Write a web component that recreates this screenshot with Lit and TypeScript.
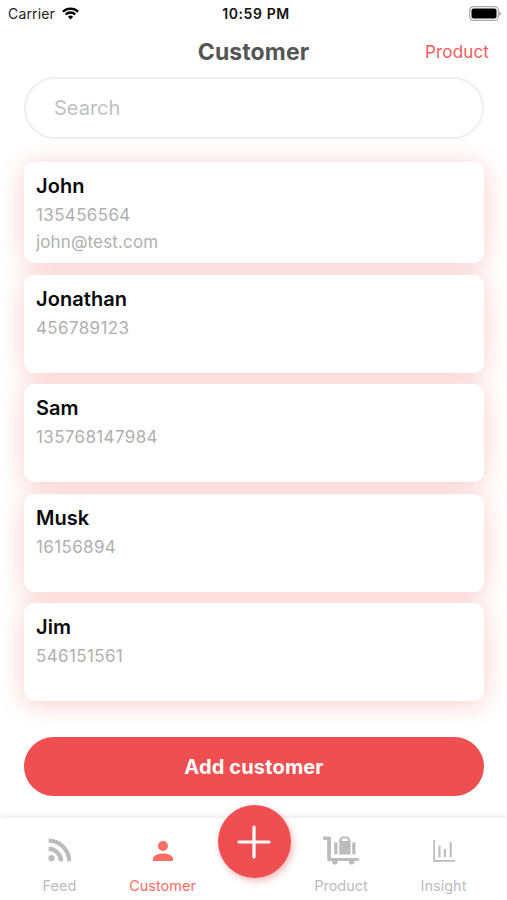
import { LitElement, html, css, svg } from "lit";
import { customElement } from "lit/decorators.js";
import { classMap } from "lit/directives/class-map.js";

interface Customer {
  name: string;
  phone: string;
  email?: string;
}

const customers: Customer[] = [
  { name: "John", phone: "135456564", email: "john@test.com" },
  { name: "Jonathan", phone: "456789123" },
  { name: "Sam", phone: "135768147984" },
  { name: "Musk", phone: "16156894" },
  { name: "Jim", phone: "546151561" },
];

const feedIcon = svg`<svg width="24" height="24" viewBox="0 0 24 24" fill="none" stroke="currentColor" stroke-width="4.200">
  <circle cx="3.500" cy="20.200" r="3.100" fill="currentColor" stroke="none"/>
  <path d="M.6 10.900A12.500 12.500 0 0 1 13.100 23.200M.6 2.700A20.600 20.600 0 0 1 21.200 23.200"/></svg>`;

const personIcon = svg`<svg width="20" height="20" viewBox="0 0 20 20" fill="currentColor">
  <circle cx="10" cy="5" r="5"/>
  <path d="M0 20v-2.200C0 14.400 5.600 12.600 10 12.600s10 1.800 10 5.200V20z"/></svg>`;

const cartIcon = svg`<svg width="37" height="29" viewBox="0 0 37 29" fill="currentColor">
  <path d="M0 .6h6.500q1.500 0 1.500 1.500V22h27.200q1.200 0 1.200 1.500t-1.200 1.500h-3.800a2.900 2.900 0 1 1-5.600 0H14.700a2.900 2.900 0 1 1-5.600 0H5.500q-1.300 0-1.300-1.300V3.900H1.100Q0 3.900 0 2.700z"/>
  <rect x="11.200" y="6.300" width="3.300" height="12.200" rx="1.300"/>
  <rect x="29.200" y="6.300" width="3.300" height="12.200" rx="1.300"/>
  <path fill-rule="evenodd" d="M16.200 4.600 17.200 2.300Q17.600.6 19.200.6h5.200q1.600 0 2 1.700l1.100 2.300v13.900H16.200zM18.900 5h5.800V3.200q0-.6-.6-.6h-4.600q-.6 0-.6.6z"/></svg>`;

const chartIcon = svg`<svg width="22" height="22" viewBox="0 0 22 22" fill="none" stroke="currentColor" stroke-width="1.700">
  <path d="M1.100 0v20.800H22"/>
  <path stroke-width="2.100" d="M6.500 5.800v11.400M11.900 9v8.200M17.700 1.900v15.300"/></svg>`;

const wifiIcon = svg`<svg width="17" height="13" viewBox="0 0 17 13" fill="none" stroke="#000" stroke-width="2.300">
  <path d="M.9 4.700a10.800 10.800 0 0 1 15.200 0M3.700 7.500a6.800 6.800 0 0 1 9.600 0"/>
  <path fill="#000" stroke="none" d="M8.500 12.500 5.900 9.700a3.700 3.700 0 0 1 5.200 0z"/></svg>`;

const batteryIcon = svg`<svg width="32" height="15" viewBox="0 0 32 15">
  <rect x=".7" y=".7" width="28.600" height="13.600" rx="3.600" fill="#fff" stroke="#aaa" stroke-width="1.200"/>
  <rect x="2.500" y="2.600" width="25" height="9.800" rx="2" fill="#000"/>
  <path d="M30.300 5.200q1.500.6 1.500 2.300t-1.500 2.300z" fill="#999"/></svg>`;

const tabs = [
  { label: "Feed", icon: feedIcon, key: "feed" },
  { label: "Customer", icon: personIcon, key: "customer" },
  { label: "", icon: "", key: "gap" },
  { label: "Product", icon: cartIcon, key: "product" },
  { label: "Insight", icon: chartIcon, key: "insight" },
];

@customElement("customer-card")
class CustomerCard extends LitElement {
  static properties = { customer: { attribute: false } };
  declare customer: Customer;

  static styles = css`
    :host {
      display: block;
      position: relative;
      box-sizing: border-box;
      min-height: 98px;
      padding: 11px 12px 7px;
      border-radius: 11px;
      background: #fff;
    }
    :host::before {
      content: "";
      position: absolute;
      inset: 0;
      z-index: -1;
      border-radius: 11px;
      box-shadow: 0 3px 25px rgba(236, 72, 72, 0.28);
    }
    .name {
      font-size: 20px;
      font-weight: 600;
      line-height: 27px;
      color: #0a0a0a;
      letter-spacing: 0.06px;
    }
    .line {
      font-size: 17px;
      line-height: 27px;
      color: #b0b0b0;
    }
    .phone {
      margin-top: 2px;
      letter-spacing: 0.36px;
    }
    .email {
      letter-spacing: 0.15px;
    }
  `;

  render() {
    const { name, phone, email } = this.customer;
    return html`
      <div class="name">${name}</div>
      <div class="line phone">${phone}</div>
      ${email ? html`<div class="line email">${email}</div>` : ""}
    `;
  }
}

@customElement("app-root")
class AppRoot extends LitElement {
  static styles = css`
    :host {
      display: flex;
      flex-direction: column;
      height: 900px;
      overflow: hidden;
      background: #fff;
      font-family: Inter, "Liberation Sans", sans-serif;
    }
    svg {
      display: block;
    }
    .status {
      display: grid;
      grid-template-columns: 1fr auto 1fr;
      align-items: center;
      height: 27px;
      padding: 0 6px 0 8px;
      font-size: 14px;
      color: #222;
    }
    .carrier {
      display: flex;
      align-items: center;
      gap: 7px;
      letter-spacing: 0.15px;
    }
    .clock {
      padding-left: 3px;
      font-weight: 600;
      color: #111;
      letter-spacing: 0.6px;
    }
    .battery {
      justify-self: end;
    }
    .header {
      display: grid;
      grid-template-columns: 1fr auto 1fr;
      align-items: center;
      height: 50px;
      padding: 0 18px;
    }
    .title {
      grid-column: 2;
      font-size: 23px;
      font-weight: 700;
      color: #555;
      letter-spacing: 0.1px;
    }
    .link {
      justify-self: end;
      font-size: 17px;
      color: #f25c5e;
      letter-spacing: 0.15px;
    }
    .search {
      display: flex;
      align-items: center;
      box-sizing: border-box;
      flex: none;
      height: 62px;
      margin: 0 23px 0 24px;
      padding: 0 28px;
      border: 2px solid #efefef;
      border-radius: 31px;
      font-size: 20px;
      color: #c0c0c0;
    }
    .list {
      display: flex;
      flex-direction: column;
      gap: 11.5px;
      isolation: isolate;
      margin: 23px 23px 0 24px;
    }
    .add {
      flex: none;
      height: 59px;
      margin: 36px 23px 0 24px;
      border: 0;
      border-radius: 30px;
      background: #ef4f51;
      color: #fff;
      font: 700 20px Inter, "Liberation Sans", sans-serif;
      letter-spacing: 0.15px;
    }
    .tabs {
      display: grid;
      grid-template-columns: 119px 87px 97px 76px 129px;
      position: relative;
      flex: 1;
      margin-top: 22px;
      background: #fff;
      box-shadow: 0 -2px 5px rgba(0, 0, 0, 0.08);
    }
    .tab {
      display: flex;
      flex-direction: column;
      align-items: center;
      color: #bcbcbc;
      font-size: 14.5px;
    }
    .active {
      color: #ff6e66;
    }
    .glyph {
      display: flex;
      align-items: center;
      box-sizing: border-box;
      height: 24px;
      margin: 20px 0 15px;
    }
    .customer .glyph,
    .insight .glyph {
      padding-top: 2px;
    }
    .label {
      line-height: 18px;
    }
    .fab {
      position: absolute;
      left: 217.5px;
      top: -13px;
      width: 73px;
      height: 73px;
      padding: 0;
      border: 0;
      border-radius: 50%;
      display: grid;
      place-items: center;
      background: #ef4f51;
      box-shadow: 2px 3px 7px rgba(239, 79, 81, 0.4);
    }
  `;

  render() {
    return html`
      <div class="status">
        <div class="carrier"><span>Carrier</span>${wifiIcon}</div>
        <div class="clock">10:59 PM</div>
        <div class="battery">${batteryIcon}</div>
      </div>
      <div class="header">
        <div class="title">Customer</div>
        <div class="link">Product</div>
      </div>
      <div class="search">Search</div>
      <div class="list">
        ${customers.map((c) => html`<customer-card .customer=${c}></customer-card>`)}
      </div>
      <button class="add">Add customer</button>
      <nav class="tabs">
        ${tabs.map(
          (t) => html`<div class=${classMap({ tab: true, [t.key]: true, active: t.key === "customer" })}>
            <div class="glyph">${t.icon}</div>
            <div class="label">${t.label}</div>
          </div>`
        )}
        <button class="fab" aria-label="Add">
          <svg width="34" height="34" viewBox="0 0 34 34" fill="none" stroke="#fff" stroke-width="3.200" stroke-linecap="round">
            <path d="M17 2v30M2 17h30" />
          </svg>
        </button>
      </nav>
    `;
  }
}
